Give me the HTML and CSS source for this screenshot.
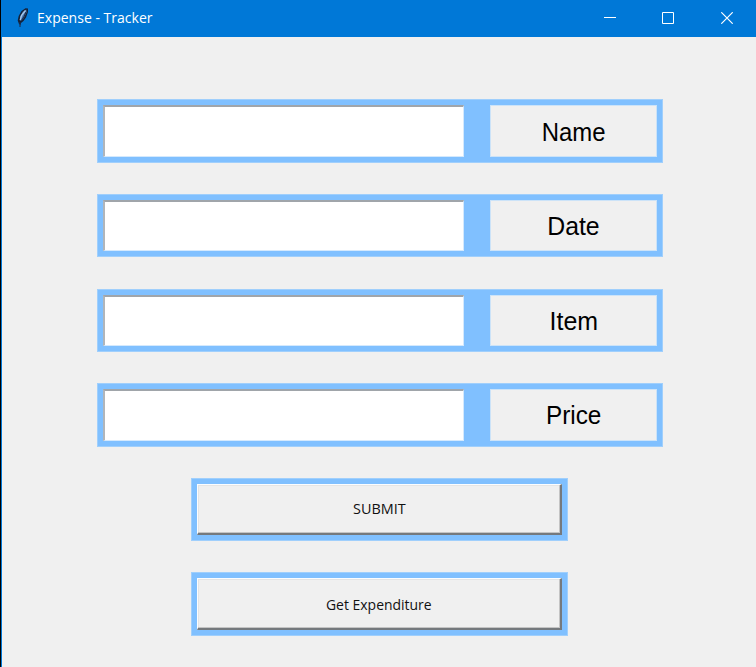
FILE: index.html
```html
<!DOCTYPE html>
<html lang="en">
<head>
<meta charset="utf-8">
<title>Expense - Tracker</title>
<link rel="stylesheet" href="styles.css">
</head>
<body>
<div class="window">
  <header class="titlebar">
    <svg class="feather" width="14" height="22" viewBox="0 0 14 22">
      <path d="M3 17 L1.7 13.5 L2.7 9 L5.5 4 L9.5 1.2 L12 1.5 L12 5 L10 10.5 L7.5 14 L5 16 L4.5 18 Z" fill="#142138"/>
      <path d="M3.8 13.5 L4.2 9.5 L6.8 4.8 L10.3 2.5 L10.5 5.5 L8 10.8 L5.5 13.5 Z" fill="#4e7fb8"/>
      <path d="M4.2 13 L5.5 8.5 L9.5 3.5" fill="none" stroke="#a9c8e8" stroke-width="1.3"/>
      <path d="M5.5 13.5 L8 9.5 L10 5 M4 15 V20" fill="none" stroke="#1b2f50" stroke-width="1.1"/>
    </svg>
    <h1 class="title"><span class="title-text">Expense - Tracker</span></h1>
    <div class="controls">
      <svg width="12" height="12" viewBox="0 0 12 12"><path d="M0 5.5H12"/></svg>
      <svg width="12" height="12" viewBox="0 0 12 12"><path d="M.5 .5H11.5V11.5H.5Z"/></svg>
      <svg width="12" height="12" viewBox="0 0 12 12"><path d="M.3 .3L11.7 11.7M11.7 .3L.3 11.7"/></svg>
    </div>
  </header>
  <main class="form">
    <div class="frame field tall"><input class="entry" type="text" aria-label="Name"><label class="label"><span class="name">Name</span></label></div>
    <div class="frame field"><input class="entry" type="text" aria-label="Date"><label class="label"><span class="date">Date</span></label></div>
    <div class="frame field"><input class="entry" type="text" aria-label="Item"><label class="label"><span class="item">Item</span></label></div>
    <div class="frame field tall"><input class="entry" type="text" aria-label="Price"><label class="label"><span class="price">Price</span></label></div>
    <div class="frame action"><button class="button"><span class="submit">SUBMIT</span></button></div>
    <div class="frame action tall"><button class="button"><span class="get">Get Expenditure</span></button></div>
  </main>
</div>
</body>
</html>
```

FILE: styles.css
```css
* { box-sizing: border-box; }
body { margin: 0; background: #000; overflow: hidden; }
.window {
  height: 667px;
  margin-left: 1px;
  border-left: 1px solid #0078d7;
  background: #f0f0f0;
}
.titlebar {
  height: 37px;
  display: flex;
  align-items: center;
  padding: 0 23px 0 14px;
  background: #0078d7;
  color: #fff;
}
.feather { margin-right: 7px; margin-top: -2px; }
.title {
  margin: 0;
  flex: 1;
  font: 400 15px/20px "Open Sans", sans-serif;
  white-space: nowrap;
}
.title-text { display: inline-block; transform: translateY(-2px) scaleX(.935); transform-origin: left; }
.controls { display: flex; gap: 46px; }
.controls svg { fill: none; stroke: #fff; stroke-width: 1; margin-top: -1px; }
.controls svg:last-child { stroke-width: 1.2; margin-left: 1px; }
.form {
  display: grid;
  grid-template-rows: 95px 95px 94px 95px 94px 64px;
  padding: 62px 0 0 95px;
}
.frame {
  height: 63px;
  padding: 5px;
  display: flex;
  background: #80c0ff;
  border: 1px solid #a0cffc;
}
.tall { height: 64px; }
.field { width: 566px; justify-content: space-between; }
.entry {
  width: 361px;
  padding: 0 8px;
  border: 1px solid #d4e9fd;
  border-top: 2px solid #a0a5aa;
  border-left: 2px solid #b0b5ba;
  border-radius: 0;
  background: #fff;
  font: 24px "Liberation Sans", sans-serif;
  outline: 0;
}
.label {
  width: 167px;
  display: flex;
  align-items: center;
  justify-content: center;
  border: 1px solid #cce3f8;
  background: #f0f0f0;
  color: #000;
  font: 26px/30px "Liberation Sans", sans-serif;
}
.label span { display: inline-block; white-space: nowrap; }
.action { width: 377px; margin-left: 94px; }
.button {
  flex: 1;
  padding: 0;
  border: 2px solid;
  border-width: 1px 2px 2px 1px;
  border-color: #fbfdff #75797d #75797d #fbfdff;
  border-radius: 0;
  box-shadow: inset -1px -1px #c4c4c4, inset 1px 1px #e5e5e5;
  background: #f0f0f0;
  color: #111;
  font: 15px/20px "Open Sans", sans-serif;
}
.button span { display: inline-block; white-space: nowrap; }
.name { transform: translateY(1px) scaleX(.92); }
.date { transform: scaleX(.955); }
.item { transform: translateX(.5px) scaleX(.96); }
.price { transform: scaleX(.935); }
.submit { transform: translateY(-1.5px) scaleX(.96); }
.get { transform: translateY(-.5px) scaleX(.93); }
```
